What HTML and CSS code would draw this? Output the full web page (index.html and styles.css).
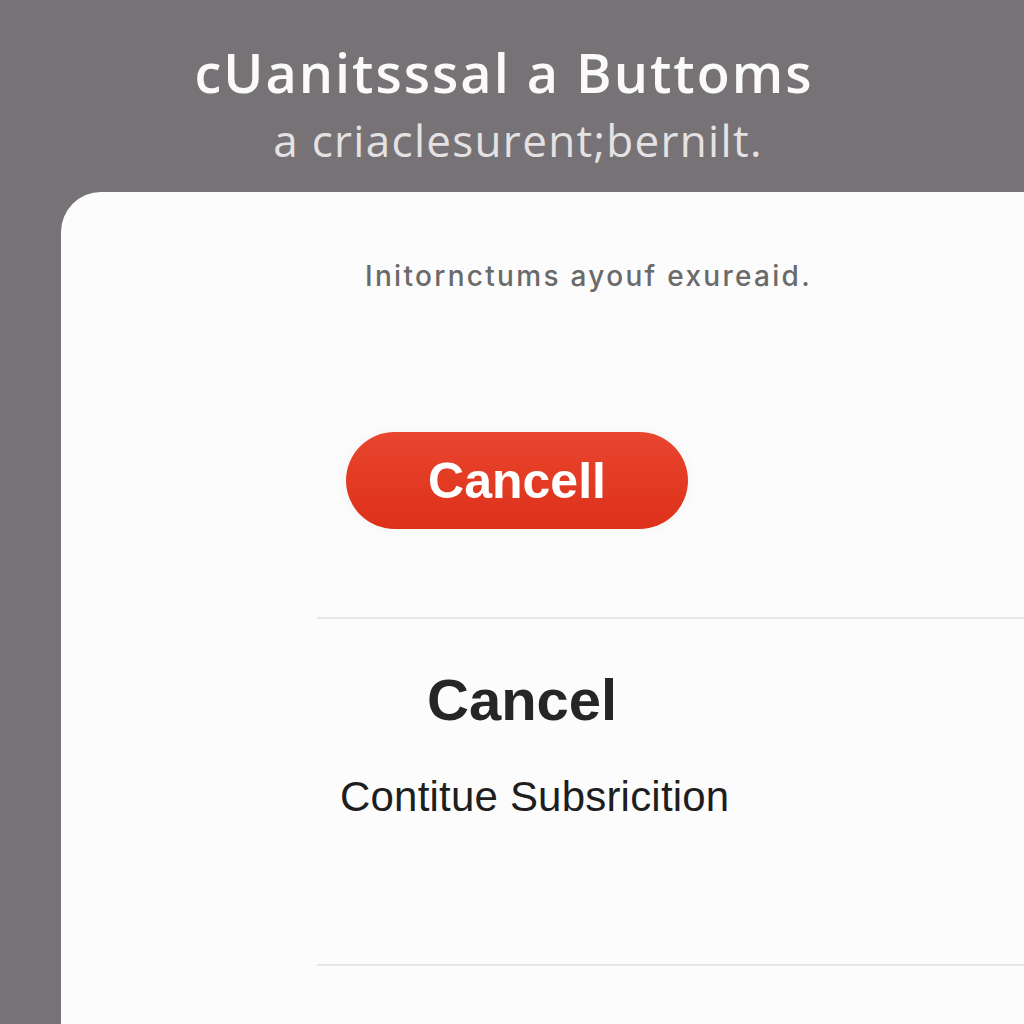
FILE: index.html
```html
<!DOCTYPE html>
<html lang="en">
<head>
<meta charset="utf-8">
<title>Buttons</title>
<link rel="stylesheet" href="styles.css">
</head>
<body>
  <header class="hero">
    <h1 class="hero-title">cUanitsssal a Buttoms</h1>
    <p class="hero-sub">a criaclesurent;bernilt.</p>
  </header>
  <main class="card">
    <p class="intro">Initornctums ayouf exureaid.</p>
    <button class="btn-danger" type="button">Cancell</button>
    <hr class="rule">
    <div class="option-title">Cancel</div>
    <div class="option-link">Contitue Subsricition</div>
    <hr class="rule rule-bottom">
  </main>
</body>
</html>
```
FILE: styles.css
```css
html, body {
  margin: 0;
  padding: 0;
  height: 100%;
}

body {
  background: #767275;
  overflow: hidden;
  display: flex;
  flex-direction: column;
}

.hero {
  text-align: center;
  padding-top: 40px;
  height: 148px;
  box-sizing: border-box;
}

.hero-title {
  margin: 0;
  font-family: "Open Sans", "Noto Sans", sans-serif;
  font-weight: 600;
  font-size: 54px;
  line-height: 64px;
  color: #fafafa;
  letter-spacing: 2px;
  padding-right: 16px;
}

.hero-sub {
  margin: 10px 0 0;
  font-family: "Open Sans", "Noto Sans", sans-serif;
  font-weight: 400;
  font-size: 44px;
  line-height: 52px;
  letter-spacing: 1.3px;
  color: #e4e2e3;
  padding-left: 12px;
}

.card {
  flex: 1;
  margin-top: 44px;
  margin-left: 61px;
  background: #fcfcfc;
  border-top-left-radius: 40px;
  padding-left: 256px;
  display: flex;
  flex-direction: column;
  align-items: flex-start;
}

.intro {
  margin: 64px 0 0 48px;
  font-family: "Inter", "Noto Sans", sans-serif;
  font-weight: 500;
  font-size: 28px;
  line-height: 40px;
  letter-spacing: 2.3px;
  color: #6a6a6a;
}

.btn-danger {
  margin: 136px 0 0 29px;
  width: 342px;
  height: 97px;
  border: none;
  border-radius: 49px;
  background: linear-gradient(180deg, #e9462f 0%, #dd3019 100%);
  color: #ffffff;
  font-family: "Liberation Sans", Arial, sans-serif;
  font-weight: 700;
  font-size: 50px;
  padding: 0;
  box-shadow: 0 0 18px rgba(0, 0, 0, 0.04);
}

.rule {
  align-self: stretch;
  border: none;
  height: 2px;
  background: #e6e6e6;
  margin: 88px 0 0 0;
}

.option-title {
  margin: 48px 0 0 110px;
  font-family: "Liberation Sans", Arial, sans-serif;
  font-weight: 700;
  font-size: 58px;
  line-height: 66px;
  color: #262626;
}

.option-link {
  margin: 39px 0 0 23px;
  font-family: "Liberation Sans", Arial, sans-serif;
  font-weight: 400;
  font-size: 42px;
  line-height: 50px;
  letter-spacing: 0.2px;
  color: #1e1e1e;
}

.rule-bottom {
  margin-top: 142px;
}
```
